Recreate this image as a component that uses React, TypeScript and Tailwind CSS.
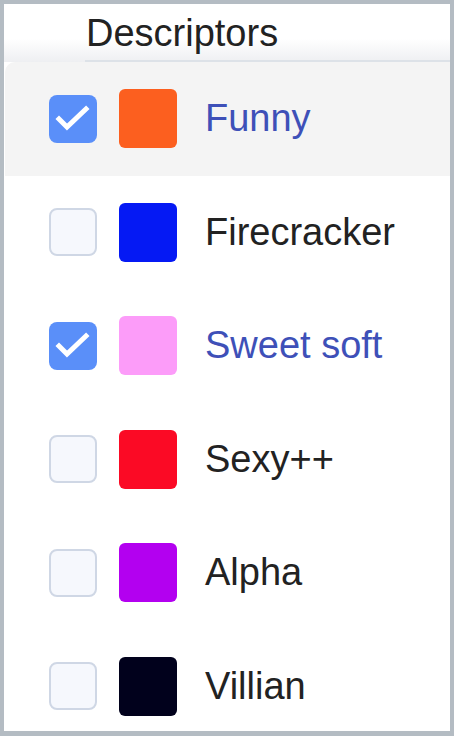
type Item = { label: string; color: string; checked: boolean }

const items: Item[] = [
  { label: 'Funny', color: 'bg-[#fc5f1f]', checked: true },
  { label: 'Firecracker', color: 'bg-[#0519f4]', checked: false },
  { label: 'Sweet soft', color: 'bg-[#fc9cf9]', checked: true },
  { label: 'Sexy++', color: 'bg-[#fb0a25]', checked: false },
  { label: 'Alpha', color: 'bg-[#b300f0]', checked: false },
  { label: 'Villian', color: 'bg-[#01011c]', checked: false },
]

function Row({ item, active }: { item: Item; active: boolean }) {
  return (
    <div className={`flex h-[113.5px] shrink-0 items-center pl-[44px] ${active ? 'bg-[#f4f4f4]' : 'bg-white'}`}>
      {item.checked ? (
        <div className="h-[48px] w-[48px] rounded-[8px] bg-[#5a8ff9]">
          <svg viewBox="0 0 48 48" className="h-[48px] w-[48px]">
            <polyline points="10,24 18,32 37,14" fill="none" stroke="white" strokeWidth="5" strokeLinecap="square" />
          </svg>
        </div>
      ) : (
        <div className="h-[48px] w-[48px] rounded-[8px] border-2 border-[#cfd7e5] bg-[#f6f8fd]" />
      )}
      <div className={`ml-[22px] h-[59px] w-[58px] rounded-[6px] ${item.color}`} />
      <span className={`ml-[28px] text-[38px] ${item.checked ? 'text-[#3e50b8]' : 'text-[#222222]'}`}>
        {item.label}
      </span>
    </div>
  )
}

export default function App() {
  return (
    <div
      className="h-[736px] w-[454px] bg-[#b4bcc3] pb-[5px] pl-[4px] pr-[4px] pt-[4px]"
      style={{ fontFamily: '"Liberation Sans", Arial, sans-serif' }}
    >
      <div className="flex h-full flex-col overflow-hidden bg-white">
        <div className="relative h-[58px] shrink-0 bg-gradient-to-b from-white from-60% to-[#eeeff2]">
          <div className="pl-[82px] pt-[7px] text-[38px] leading-[44px] text-[#222222]">Descriptors</div>
          <div className="absolute bottom-0 left-[81px] right-0 h-[2px] bg-[#dde2e8]" />
        </div>
        <div className="ml-[1px] flex flex-col overflow-hidden rounded-tl-[10px]">
          {items.map((item, i) => (
            <Row key={item.label} item={item} active={i === 0} />
          ))}
        </div>
      </div>
    </div>
  )
}
